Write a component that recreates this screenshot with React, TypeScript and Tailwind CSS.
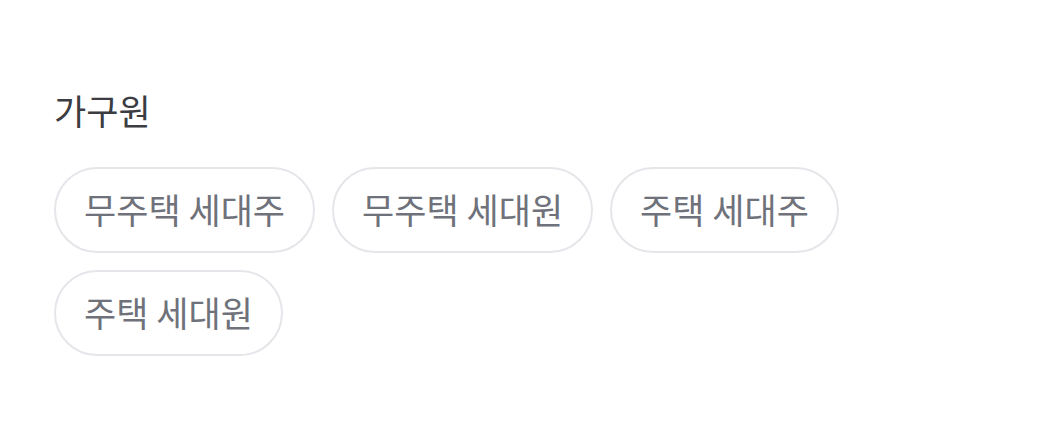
import React from "react";

const options: string[] = ["무주택 세대주", "무주택 세대원", "주택 세대주", "주택 세대원"];

export default function App() {
  return (
    <div
      className="w-[1040px] h-[439px] bg-white px-[54px] pt-[88px]"
      style={{ fontFamily: '"Noto Sans CJK KR", "Noto Sans", sans-serif' }}
    >
      <h2 className="text-[35px] leading-[44px] text-[#3b3d42] font-normal">가구원</h2>

      {/* chips */}
      <div className="mt-[35px] flex flex-wrap gap-[17px] w-[820px]">
        {options.map((label) => (
          <button
            key={label}
            className="h-[86px] px-[28px] pb-[3px] rounded-full border-2 border-[#e5e6ea] bg-white text-[35px] leading-[44px] text-[#6f727a]"
          >
            {label}
          </button>
        ))}
      </div>
    </div>
  );
}
